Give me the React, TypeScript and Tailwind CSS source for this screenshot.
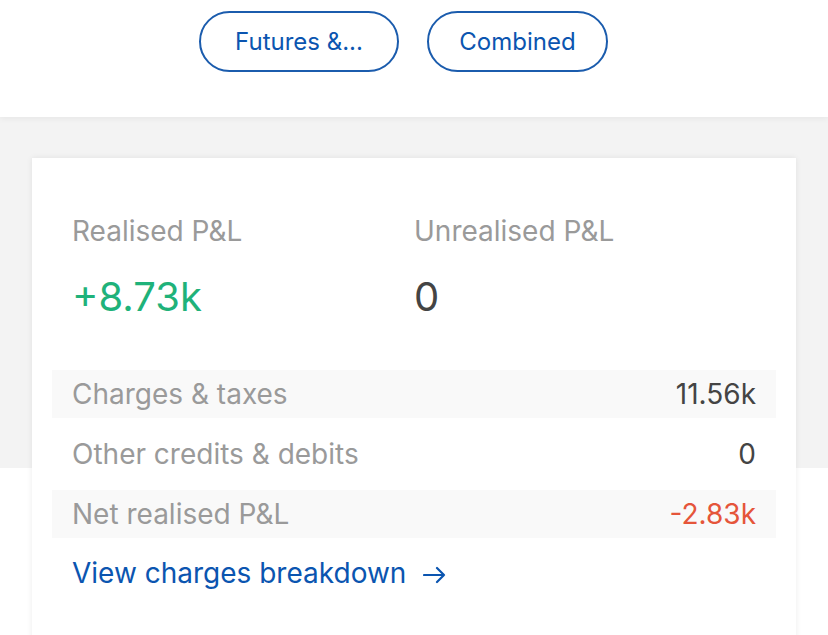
const ROWS = [
  { label: "Charges & taxes", value: "11.56k", shaded: true, tone: "text-[#444444]" },
  { label: "Other credits & debits", value: "0", shaded: false, tone: "text-[#444444]" },
  { label: "Net realised P&L", value: "-2.83k", shaded: true, tone: "text-[#e5553a]" },
];

export default function App() {
  return (
    <div className="h-[635px] overflow-hidden bg-white font-['Inter',sans-serif]">
      <div className="relative z-10 h-[117px] bg-white shadow-[0_2px_6px_rgba(0,0,0,0.05)]">
        <div className="flex gap-7 pl-[199px] pt-[11px]">
          <button className="h-[61px] w-[200px] rounded-full border-2 border-[#1b5cad] text-[24px] text-[#0b55b0]">
            Futures &amp;...
          </button>
          <button className="h-[61px] w-[181px] rounded-full border-2 border-[#1b5cad] text-[24px] text-[#0b55b0]">
            Combined
          </button>
        </div>
      </div>

      <div className="bg-[linear-gradient(to_bottom,#f3f3f3_351px,#ffffff_351px)] px-8 pt-[41px]">
        <div className="bg-white px-5 pt-[55px] pb-16 shadow-[0_0_6px_rgba(0,0,0,0.08)]">
          <div className="grid grid-cols-2 px-5">
            <div>
              <div className="text-[28px] leading-9 text-[#9a9a9a]">Realised P&amp;L</div>
              <div className="mt-6 text-[40px] leading-[48px] text-[#1fb27a]">+8.73k</div>
            </div>
            <div>
              <div className="text-[28px] leading-9 text-[#9a9a9a]">Unrealised P&amp;L</div>
              <div className="mt-6 text-[40px] leading-[48px] text-[#444444]">0</div>
            </div>
          </div>

          <div className="mt-[49px] flex flex-col gap-3">
            {ROWS.map(row => (
              <div
                key={row.label}
                className={`flex h-12 items-center justify-between px-5 text-[28px] ${
                  row.shaded ? "bg-[#f9f9f9]" : ""
                }`}
              >
                <span className="text-[#9a9a9a]">{row.label}</span>
                <span className={row.tone}>{row.value}</span>
              </div>
            ))}
          </div>

          <a className="mt-[17px] flex items-center gap-[17px] px-5 text-[28px] leading-9 text-[#0b55b0]">
            View charges breakdown
            <svg width="23" height="18" viewBox="0 0 23 18" fill="none" stroke="currentColor" strokeWidth="2.2" strokeLinecap="round" strokeLinejoin="round" className="mt-1">
              <path d="M1 9H21M14 2L21 9L14 16" />
            </svg>
          </a>
        </div>
      </div>
    </div>
  );
}
